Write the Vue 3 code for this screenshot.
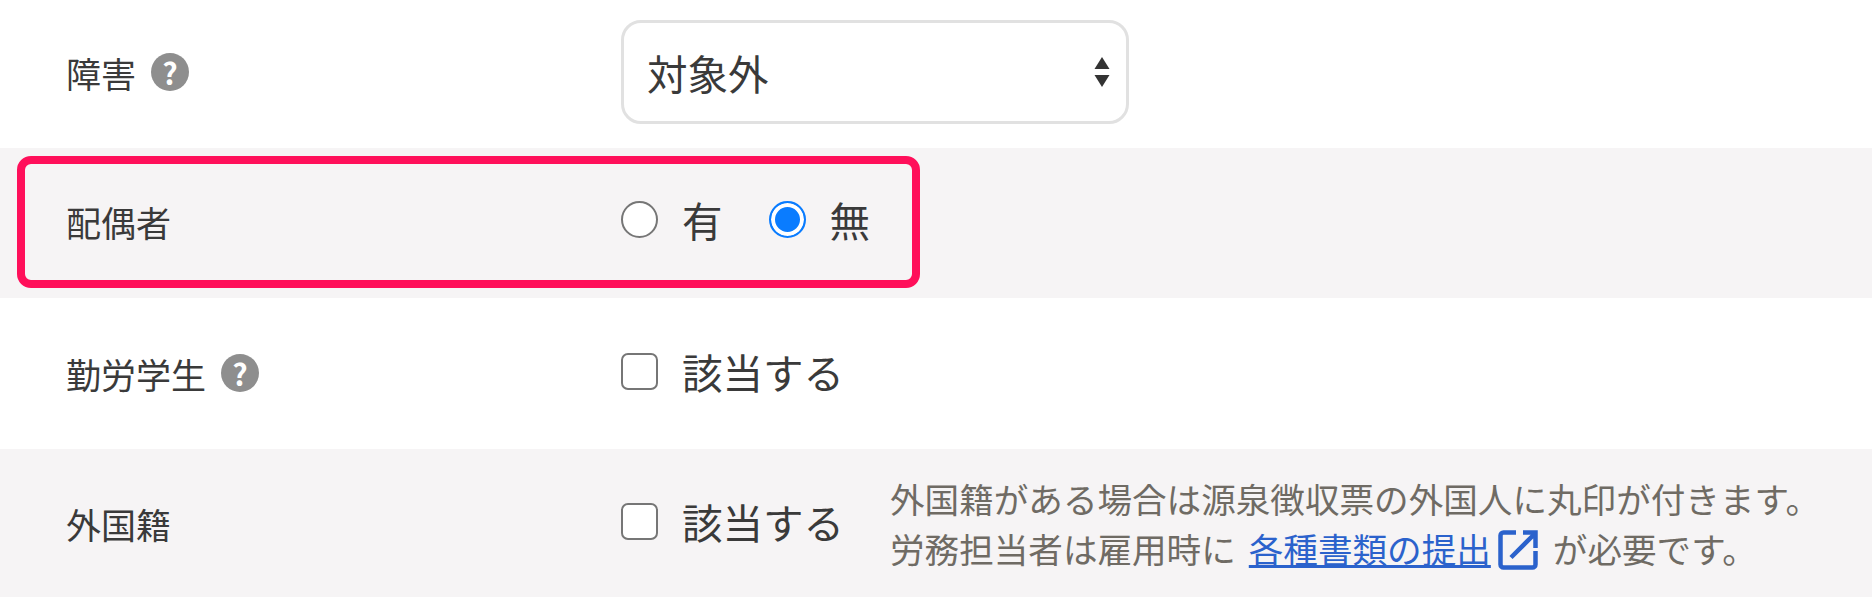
<script setup>
import { ref } from 'vue'

const disability = ref('対象外')
const spouse = ref('no')
const student = ref(false)
const foreign = ref(false)
</script>

<template>
  <div class="form">
    <div class="row first">
      <div class="label">
        障害
        <span class="help">?</span>
      </div>
      <div class="control">
        <div class="select-wrap">
          <select v-model="disability" class="select">
            <option>対象外</option>
          </select>
          <svg class="select-arrows" width="16" height="32" viewBox="0 0 16 32">
            <path d="M8 1 15.5 13H.5z" fill="#333" />
            <path d="M8 31 .5 19h15z" fill="#333" />
          </svg>
        </div>
      </div>
    </div>

    <div class="row alt spouse">
      <div class="highlight"></div>
      <div class="label">配偶者</div>
      <div class="control radios">
        <label class="option">
          <input v-model="spouse" type="radio" class="radio" value="yes" />
          <span>有</span>
        </label>
        <label class="option">
          <input v-model="spouse" type="radio" class="radio" value="no" />
          <span>無</span>
        </label>
      </div>
    </div>

    <div class="row student">
      <div class="label">
        勤労学生
        <span class="help">?</span>
      </div>
      <div class="control">
        <label class="option">
          <input v-model="student" type="checkbox" class="check" />
          <span>該当する</span>
        </label>
      </div>
    </div>

    <div class="row alt">
      <div class="label">外国籍</div>
      <div class="control">
        <label class="option">
          <input v-model="foreign" type="checkbox" class="check" />
          <span>該当する</span>
        </label>
        <div class="note">
          <p>外国籍がある場合は源泉徴収票の外国人に丸印が付きます。</p>
          <p class="note-line">
            労務担当者は雇用時に
            <a class="link" href="#">各種書類の提出</a>
            <svg class="ext" width="40" height="40" viewBox="0 0 40 40" fill="none">
              <path d="M18 2.5H5.5a3 3 0 0 0-3 3v29a3 3 0 0 0 3 3h29a3 3 0 0 0 3-3V21" />
              <path d="M13 27.5 37 3.5M25 2.5h12.5V18" />
            </svg>
            が必要です。
          </p>
        </div>
      </div>
    </div>
  </div>
</template>

<style>
html, body {
  background: #fff;
}
</style>

<style scoped>
.form {
  width: 1872px;
  font-family: "Noto Sans CJK JP", "Noto Sans", sans-serif;
  color: #3a3a3a;
}

.row {
  position: relative;
  height: 148px;
  display: flex;
  align-items: center;
  padding-left: 66px;
}

.first {
  padding-bottom: 4px;
  box-sizing: border-box;
}

.spouse {
  height: 150px;
  padding-bottom: 4px;
  box-sizing: border-box;
}

.student {
  height: 151px;
  padding-bottom: 1px;
  box-sizing: border-box;
}

.alt {
  background: #f6f4f5;
}

.label {
  width: 555px;
  flex-shrink: 0;
  display: flex;
  align-items: center;
  font-size: 35px;
}

.help {
  width: 38px;
  height: 38px;
  margin-left: 15px;
  border-radius: 50%;
  background: #8e8e8e;
  color: #fff;
  font-size: 30px;
  font-weight: 700;
  line-height: 38px;
  text-align: center;
}

.control {
  display: flex;
  align-items: center;
  font-size: 40.5px;
}

.select-wrap {
  position: relative;
  width: 508px;
  height: 104px;
}

.select {
  width: 100%;
  height: 100%;
  padding: 0 23px;
  appearance: none;
  border: 3px solid #e1e1e1;
  border-radius: 20px;
  background: #fff;
  color: #3a3a3a;
  font: inherit;
}

.select-arrows {
  position: absolute;
  top: 36px;
  right: 19px;
}

.radios {
  gap: 46px;
}

.option {
  display: flex;
  align-items: center;
  gap: 24px;
  margin-bottom: 3px;
}

.radio, .check {
  width: 37px;
  height: 37px;
  margin: 0;
  appearance: none;
  border: 2.5px solid #767676;
  background: #fff;
}

.radio {
  border-radius: 50%;
}

.radio:checked {
  border-color: #0a7cff;
  background: #0a7cff;
  box-shadow: inset 0 0 0 4px #fff;
}

.check {
  border-radius: 7px;
}

.note {
  margin-left: 46px;
  font-size: 34.6px;
  line-height: 50px;
  color: #6f6b64;
}

.note p {
  margin: 0;
}

.note-line {
  display: flex;
  align-items: center;
}

.link {
  margin-left: 13px;
  color: #2b62cc;
  text-decoration: underline;
}

.ext {
  margin: 4px 15px 0 7px;
  stroke: #2b62cc;
  stroke-width: 4.5;
}

/* red callout sits over the spouse row */
.highlight {
  position: absolute;
  left: 17px;
  top: 8px;
  width: 903px;
  height: 132px;
  box-sizing: border-box;
  border: 8px solid #ff0f5a;
  border-radius: 14px;
}
</style>
